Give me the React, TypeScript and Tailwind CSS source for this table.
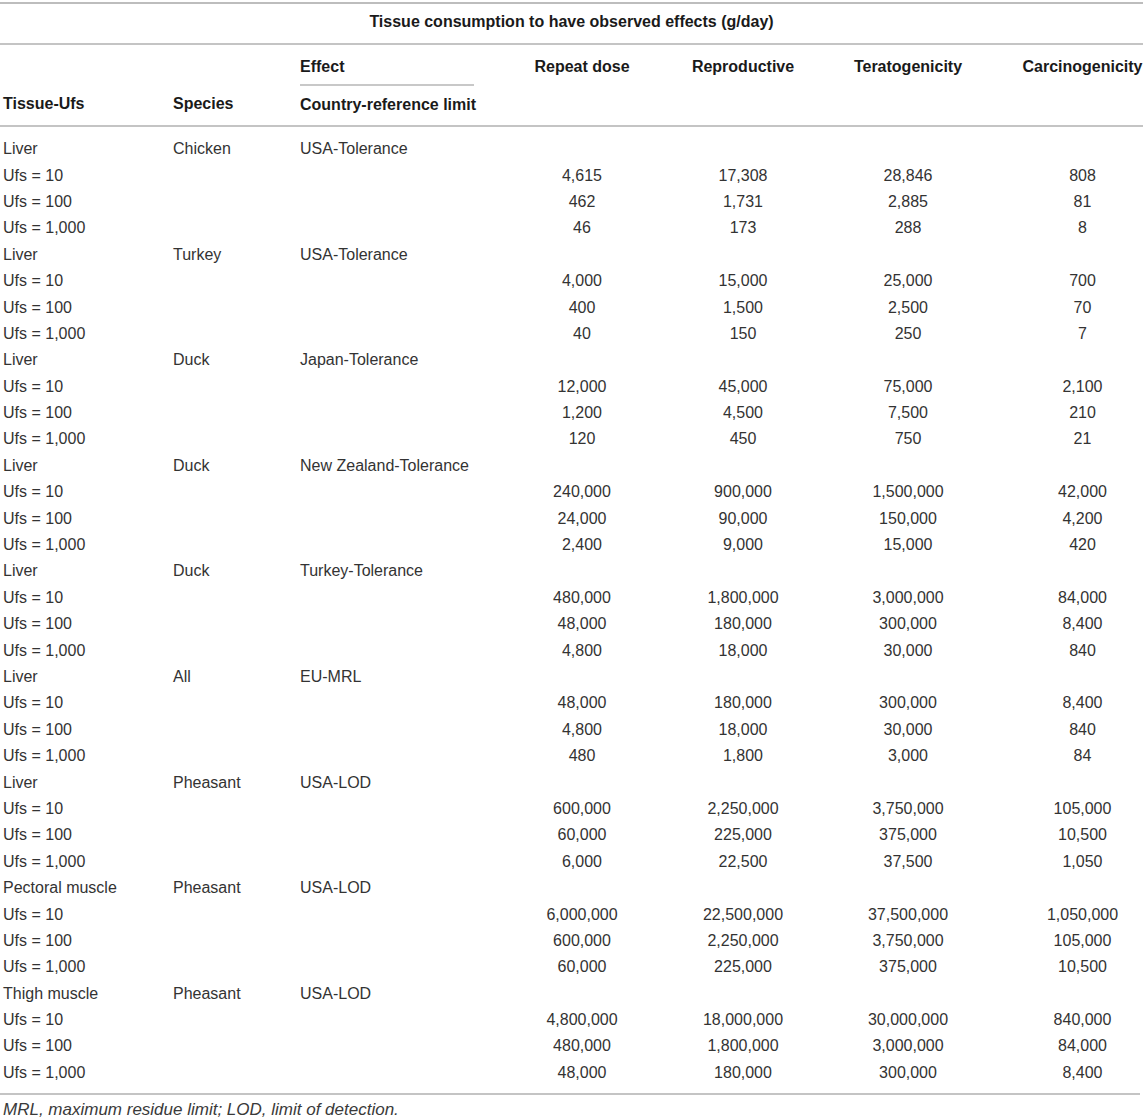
const groups = [
  { tissue: "Liver", species: "Chicken", ref: "USA-Tolerance", rows: [["4,615", "17,308", "28,846", "808"], ["462", "1,731", "2,885", "81"], ["46", "173", "288", "8"]] },
  { tissue: "Liver", species: "Turkey", ref: "USA-Tolerance", rows: [["4,000", "15,000", "25,000", "700"], ["400", "1,500", "2,500", "70"], ["40", "150", "250", "7"]] },
  { tissue: "Liver", species: "Duck", ref: "Japan-Tolerance", rows: [["12,000", "45,000", "75,000", "2,100"], ["1,200", "4,500", "7,500", "210"], ["120", "450", "750", "21"]] },
  { tissue: "Liver", species: "Duck", ref: "New Zealand-Tolerance", rows: [["240,000", "900,000", "1,500,000", "42,000"], ["24,000", "90,000", "150,000", "4,200"], ["2,400", "9,000", "15,000", "420"]] },
  { tissue: "Liver", species: "Duck", ref: "Turkey-Tolerance", rows: [["480,000", "1,800,000", "3,000,000", "84,000"], ["48,000", "180,000", "300,000", "8,400"], ["4,800", "18,000", "30,000", "840"]] },
  { tissue: "Liver", species: "All", ref: "EU-MRL", rows: [["48,000", "180,000", "300,000", "8,400"], ["4,800", "18,000", "30,000", "840"], ["480", "1,800", "3,000", "84"]] },
  { tissue: "Liver", species: "Pheasant", ref: "USA-LOD", rows: [["600,000", "2,250,000", "3,750,000", "105,000"], ["60,000", "225,000", "375,000", "10,500"], ["6,000", "22,500", "37,500", "1,050"]] },
  { tissue: "Pectoral muscle", species: "Pheasant", ref: "USA-LOD", rows: [["6,000,000", "22,500,000", "37,500,000", "1,050,000"], ["600,000", "2,250,000", "3,750,000", "105,000"], ["60,000", "225,000", "375,000", "10,500"]] },
  { tissue: "Thigh muscle", species: "Pheasant", ref: "USA-LOD", rows: [["4,800,000", "18,000,000", "30,000,000", "840,000"], ["480,000", "1,800,000", "3,000,000", "84,000"], ["48,000", "180,000", "300,000", "8,400"]] },
];

const ufs = ["Ufs = 10", "Ufs = 100", "Ufs = 1,000"];
const cols = "grid grid-cols-[172px_126px_192px_184px_138px_192px_139px]";

const Row = ({ cells }: { cells: string[] }) => (
  <div className={`${cols} h-[26.4px] items-center`}>
    <div className="pl-[3px]">{cells[0]}</div>
    <div className="pl-[1px]">{cells[1]}</div>
    <div className="pl-[2px]">{cells[2]}</div>
    <div className="text-center">{cells[3]}</div>
    <div className="text-center">{cells[4]}</div>
    <div className="text-center">{cells[5]}</div>
    <div className="pl-[18px] text-center">{cells[6]}</div>
  </div>
);

export default function App() {
  return (
    <div className="w-[1143px] bg-white font-['Liberation_Sans',Arial,sans-serif] text-[16px] leading-[24px] text-[#333]">
      <div className="mt-[2px] border-t-2 border-[#bdbdbd]" />
      <div className="pt-[6px] pb-[9px] text-center font-bold text-[#1a1a1a]">
        Tissue consumption to have observed effects (g/day)
      </div>
      <div className="border-t-2 border-[#c4c4c4]" />
      <div className={`${cols} font-bold text-[#1a1a1a]`}>
        <div className="pl-[3px] pt-[47px]">Tissue-Ufs</div>
        <div className="pl-[1px] pt-[47px]">Species</div>
        <div className="pl-[2px]">
          <div className="w-[174px] border-b-2 border-[#c8c8c8] pt-[10px] pb-[5px]">Effect</div>
          <div className="pt-[7px] pb-[8px]">Country-reference limit</div>
        </div>
        <div className="pt-[10px] text-center">Repeat dose</div>
        <div className="pt-[10px] text-center">Reproductive</div>
        <div className="pt-[10px] text-center">Teratogenicity</div>
        <div className="pt-[10px] pl-[18px] text-center">Carcinogenicity</div>
      </div>
      <div className="border-t-2 border-[#c4c4c4]" />
      <div className="pt-[9px] pb-[7px]">
        {groups.map((g, i) => (
          <div key={i}>
            <Row cells={[g.tissue, g.species, g.ref, "", "", "", ""]} />
            {g.rows.map((r, j) => (
              <Row key={j} cells={[ufs[j], "", "", ...r]} />
            ))}
          </div>
        ))}
      </div>
      <div className="mr-[3px] border-t-2 border-[#c4c4c4]" />
      <div className="pl-[3px] pt-[5px] text-[17px] leading-[20px] italic text-[#3a3a3a]">
        MRL, maximum residue limit; LOD, limit of detection.
      </div>
    </div>
  );
}
